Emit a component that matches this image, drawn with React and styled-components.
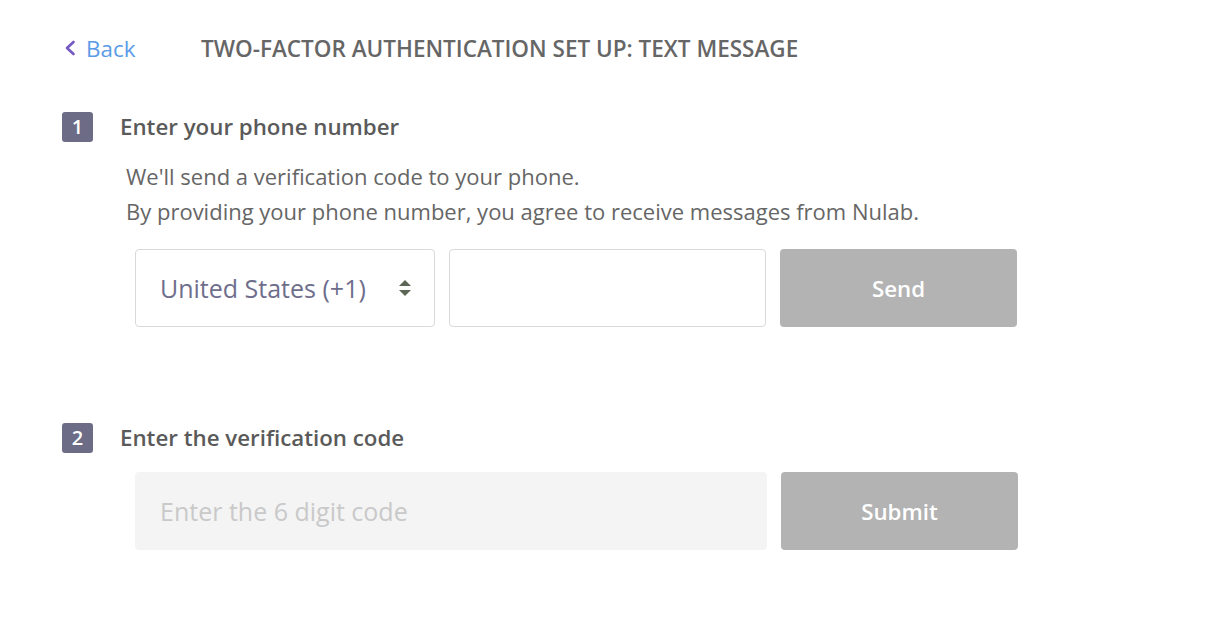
import React from "react";
import styled, { createGlobalStyle } from "styled-components";

const Global = createGlobalStyle`
  html, body { margin: 0; padding: 0; background: #ffffff; }
  body { font-family: "Open Sans", "Noto Sans", sans-serif; }
  * { box-sizing: border-box; }
`;

const Page = styled.div`
  padding: 33px 0 0 62px;
  width: 1228px;
`;

const Header = styled.div`
  display: flex;
  align-items: center;
  height: 30px;
`;

const BackLink = styled.a`
  display: flex;
  align-items: center;
  gap: 9px;
  width: 139px;
  padding-left: 1px;
  color: #5b9be6;
  font-size: 22.4px;
  text-decoration: none;
  cursor: pointer;
`;

const Title = styled.h1`
  margin: 0;
  font-size: 22.5px;
  font-weight: 600;
  color: #666666;
  letter-spacing: 0;
`;

const StepRow = styled.div`
  display: flex;
  align-items: center;
  gap: 27px;
  margin-top: ${(p) => p.$top}px;
`;

const Badge = styled.span`
  display: flex;
  align-items: center;
  justify-content: center;
  width: 31px;
  height: 30px;
  border-radius: 3px;
  background: #6c6c86;
  color: #ffffff;
  font-size: 20px;
  font-weight: 600;
`;

const StepTitle = styled.h2`
  margin: 0;
  font-size: 22.3px;
  font-weight: 600;
  color: #5a5a5a;
`;

const Description = styled.p`
  margin: 17px 0 0 64px;
  font-size: 22px;
  line-height: 35px;
  color: #666666;
`;

const FormRow = styled.div`
  display: flex;
  gap: 14px;
  margin: ${(p) => p.$top}px 0 0 73px;
  height: 78px;
`;

const SelectBox = styled.div`
  display: flex;
  align-items: center;
  justify-content: space-between;
  width: 300px;
  padding: 0 22px 0 24px;
  border: 1px solid #d9d9d9;
  border-radius: 4px;
  color: #6e6e8c;
  font-size: 25px;
  background: #ffffff;
`;

const TextInput = styled.input`
  width: ${(p) => p.$w}px;
  height: 100%;
  padding: 0 24px;
  border: 1px solid ${(p) => (p.$filled ? "#f4f4f4" : "#d9d9d9")};
  border-radius: 4px;
  background: ${(p) => (p.$filled ? "#f4f4f4" : "#ffffff")};
  font-family: inherit;
  font-size: 25px;
  color: #555;
  outline: none;
  &::placeholder { color: #c9c9c9; }
`;

const Button = styled.button`
  width: 237px;
  height: 100%;
  border: none;
  border-radius: 4px;
  background: #b3b3b3;
  color: #ffffff;
  font-family: inherit;
  font-size: 22.3px;
  font-weight: 600;
`;

const Chevron = () => (
  <svg width="14" height="20" viewBox="0 0 14 20">
    <path d="M10.5 4 L4 10 L10.5 16" fill="none" stroke="#7458c4" strokeWidth="2.6" strokeLinecap="round" strokeLinejoin="round" />
  </svg>
);

const UpDown = () => (
  <svg width="14" height="20" viewBox="0 0 14 20">
    <path d="M7 2 L13 8 H1 Z" fill="#5c6655" />
    <path d="M7 18 L13 12 H1 Z" fill="#5c6655" />
  </svg>
);

export default function App() {
  return (
    <>
      <Global />
      <Page>
        <Header>
          <BackLink>
            <Chevron />
            Back
          </BackLink>
          <Title>TWO-FACTOR AUTHENTICATION SET UP: TEXT MESSAGE</Title>
        </Header>

        <StepRow $top={48}>
          <Badge>1</Badge>
          <StepTitle>Enter your phone number</StepTitle>
        </StepRow>
        <Description>
          We'll send a verification code to your phone.
          <br />
          By providing your phone number, you agree to receive messages from Nulab.
        </Description>
        <FormRow $top={20}>
          <SelectBox>
            <span>United States (+1)</span>
            <UpDown />
          </SelectBox>
          <TextInput $w={317} type="tel" />
          <Button>Send</Button>
        </FormRow>

        <StepRow $top={95}>
          <Badge>2</Badge>
          <StepTitle>Enter the verification code</StepTitle>
        </StepRow>
        <FormRow $top={19}>
          <TextInput $w={632} $filled placeholder="Enter the 6 digit code" />
          <Button>Submit</Button>
        </FormRow>
      </Page>
    </>
  );
}
